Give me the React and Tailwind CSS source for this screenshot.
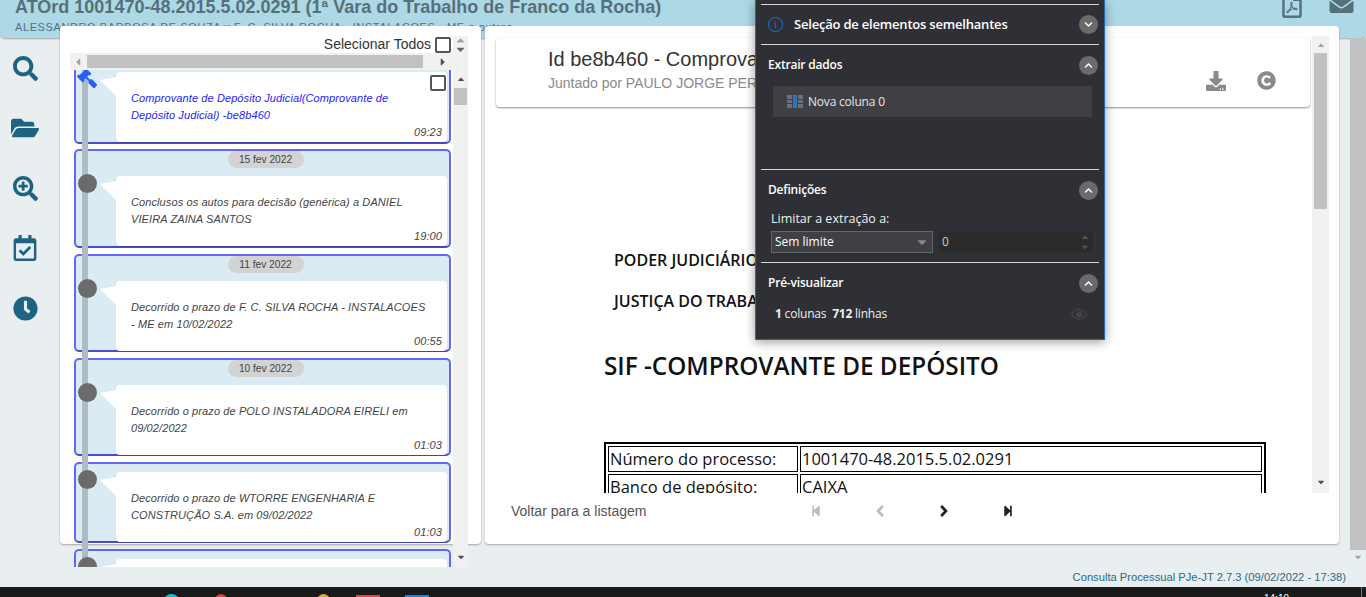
import {
  FaSearch,
  FaFolderOpen,
  FaSearchPlus,
  FaRegCalendarCheck,
  FaClock,
  FaGavel,
  FaRegFilePdf,
  FaEnvelope,
  FaDownload,
  FaCopyright,
  FaStepBackward,
  FaStepForward,
  FaAngleLeft,
  FaAngleRight,
  FaChevronDown,
  FaChevronUp,
  FaCaretUp,
  FaCaretDown,
  FaCaretLeft,
  FaCaretRight,
  FaRegEye,
} from 'react-icons/fa';

const cards = [
  { id: 2, date: '15 fev 2022', text: 'Conclusos os autos para decisão (genérica) a DANIEL VIEIRA ZAINA SANTOS', time: '19:00', h: 'h-[99px]' },
  { id: 3, date: '11 fev 2022', text: 'Decorrido o prazo de F. C. SILVA ROCHA - INSTALACOES - ME em 10/02/2022', time: '00:55', h: 'h-[98px]' },
  { id: 4, date: '10 fev 2022', text: 'Decorrido o prazo de POLO INSTALADORA EIRELI em 09/02/2022', time: '01:03', h: 'h-[98px]' },
  { id: 5, text: 'Decorrido o prazo de WTORRE ENGENHARIA E CONSTRUÇÃO S.A. em 09/02/2022', time: '01:03', h: 'h-[81px]' },
];

const railIcons = [
  { Icon: FaSearch, size: 'h-[25px] w-[25px]' },
  { Icon: FaFolderOpen, size: 'h-[28px] w-[28px]' },
  { Icon: FaSearchPlus, size: 'h-[25px] w-[25px]' },
  { Icon: FaRegCalendarCheck, size: 'h-[26px] w-[26px]' },
  { Icon: FaClock, size: 'h-[25px] w-[25px]' },
];

function Bubble({ text, time, blue, marker }) {
  return (
    <div className="relative ml-[40px] mr-[2px] h-[70px] rounded-[4px] bg-white pl-[15px] pr-[17px] pt-[18px] text-[11px] italic leading-[17px] tracking-[0.1px] shadow-[0_1px_1px_rgba(0,0,0,0.15)]">
      <svg className="absolute left-[-16px] top-[5px]" width="16" height="22" viewBox="0 0 16 22">
        <path d="M0 3 L16 0 L16 19 Z" fill="#fff" />
      </svg>
      {marker || <span className="absolute left-[-38px] top-[-2px] z-10 h-[19px] w-[19px] rounded-full bg-[#6b6b6b]" />}
      <p className={`h-[34px] ${blue ? 'text-[#2424ff]' : 'text-[#444]'}`}>{text}</p>
      <p className="absolute bottom-[1px] right-[5px] text-[11px] text-[#444]">{time}</p>
    </div>
  );
}

function Card({ date, text, time, h }) {
  return (
    <div className={`${h} mt-[6px] shrink-0 rounded-[5px] border-2 border-[#6666f5] border-b-[#4c4ad2] bg-[#dbebf3] ${date ? '' : 'pt-[8px]'}`}>
      {date && (
        <div className="flex h-[25px] justify-center">
          <span className="ml-[6px] h-[17px] w-[76px] rounded-full bg-[#d3d3d3] text-center text-[10.2px] leading-[17px] text-[#444]">{date}</span>
        </div>
      )}
      <Bubble text={text} time={time} />
    </div>
  );
}

function LeftPanel() {
  return (
    <div className="h-[518px] w-[421px] rounded-[4px] bg-white pl-[10px] pt-[10px] shadow-[0_1px_2px_rgba(0,0,0,0.3)]">
      <div className="flex h-[17px] w-[398px] items-center justify-end text-[14px] text-[#333]">
        <span>Selecionar Todos</span>
        <span className="ml-[4px] h-[16px] w-[16px] rounded-[2px] border-2 border-[#555]" />
        <div className="ml-[2px] flex h-[17px] w-[15px] flex-col items-center justify-center bg-[#f1f1f1]">
          <FaCaretUp className="-my-[2px] h-[13px] w-[13px] text-[#a3a3a3]" />
          <FaCaretDown className="-my-[2px] h-[13px] w-[13px] text-[#666]" />
        </div>
      </div>

      <div className="flex h-[17px] w-[398px] items-center bg-[#f1f1f1]">
        <FaCaretLeft className="ml-[4px] h-[12px] w-[8px] text-[#a3a3a3]" />
        <span className="ml-[5px] h-[13px] w-[336px] bg-[#c1c1c1]" />
        <FaCaretRight className="ml-[16px] h-[12px] w-[8px] text-[#505050]" />
      </div>

      <div className="relative flex h-[497px] w-[398px] overflow-hidden">
        <span className="absolute left-[12px] top-0 z-[5] h-full w-[6px] bg-[#b0bcc3]" />
        <div className="w-[383px] pl-[4px] pr-[2px]">
          <div className="relative mb-[-1px] h-[74px] rounded-b-[5px] border-2 border-t-0 border-[#6666f5] border-b-[#4c4ad2] bg-[#dbebf3] pt-[2px]">
            <Bubble
              blue
              text="Comprovante de Depósito Judicial(Comprovante de Depósito Judicial) -be8b460"
              time="09:23"
              marker={<FaGavel className="absolute left-[-39px] top-[-4px] z-10 h-[20px] w-[20px] -scale-x-100 text-[#2a5cf6]" />}
            />
            <span className="absolute right-[3px] top-[5px] h-[16px] w-[16px] rounded-[2px] border-2 border-[#555] bg-white" />
          </div>
          {cards.map((card) => (
            <Card key={card.id} {...card} />
          ))}
          <div className="mt-[6px] h-[40px] rounded-t-[5px] border-2 border-b-0 border-[#6666f5] bg-[#dbebf3] pt-[8px]">
            <Bubble text="" time="" />
          </div>
        </div>
        <div className="flex w-[15px] flex-col items-center bg-[#f1f1f1]">
          <FaCaretUp className="mt-[4px] h-[10px] w-[12px] text-[#505050]" />
          <span className="mt-[4px] h-[17px] w-[13px] bg-[#c1c1c1]" />
          <FaCaretDown className="mb-[5px] mt-auto h-[10px] w-[12px] text-[#505050]" />
        </div>
      </div>
    </div>
  );
}

function DocTable() {
  const rows = [
    ['Número do processo:', '1001470-48.2015.5.02.0291'],
    ['Banco de depósito:', 'CAIXA'],
  ];
  return (
    <table className="ml-[119px] mt-[59px] w-[662px] border-separate border-spacing-[2px] border-2 border-black text-[16.5px] leading-[22px] text-[#111]">
      <tbody>
        {rows.map(([label, value]) => (
          <tr key={label}>
            <td className="h-[26px] w-[190px] border border-black px-[1px]">{label}</td>
            <td className="h-[26px] border border-black px-[1px]">{value}</td>
          </tr>
        ))}
      </tbody>
    </table>
  );
}

function RightPanel() {
  return (
    <div className="ml-[4px] h-[518px] w-[854px] rounded-[4px] bg-white shadow-[0_1px_2px_rgba(0,0,0,0.3)]">
      <div className="flex h-[467px]">
        <div className="w-[827px] overflow-hidden pt-[12px]">
          <div className="ml-[11px] flex h-[69px] w-[814px] rounded-[4px] bg-white pl-[52px] pt-[8px] shadow-[0_1px_2px_rgba(0,0,0,0.45)]">
            <div>
              <p className="whitespace-nowrap text-[20px] leading-[26px] text-[#333]">Id be8b460 - Comprovante de Depósito Judicial</p>
              <p className="mt-[1px] whitespace-nowrap text-[14px] leading-[20px] text-[#8a8a8a]">Juntado por PAULO JORGE PER</p>
            </div>
            <div className="ml-auto mr-[34px] mt-[25px] flex items-start gap-[31px] text-[#8a8a8a]">
              <FaDownload className="h-[20px] w-[20px]" />
              <FaCopyright className="h-[19px] w-[19px]" />
            </div>
          </div>
          <div className="font-['Open_Sans',sans-serif] text-[#111]">
            <p className="ml-[129px] mt-[141px] text-[16px] font-semibold leading-[24px]">PODER JUDICIÁRIO</p>
            <p className="ml-[129px] mt-[17px] text-[16px] font-semibold leading-[24px]">JUSTIÇA DO TRABALHO</p>
            <h1 className="ml-[119px] mt-[36px] text-[24.3px] font-semibold leading-[34px]">SIF -COMPROVANTE DE DEPÓSITO</h1>
            <DocTable />
          </div>
        </div>
        <div className="mt-[10px] flex w-[17px] flex-col items-center bg-[#f1f1f1]">
          <FaCaretUp className="mt-[4px] h-[10px] w-[12px] text-[#a3a3a3]" />
          <span className="mt-[3px] h-[156px] w-[13px] bg-[#c1c1c1]" />
          <FaCaretDown className="mb-[6px] mt-auto h-[10px] w-[12px] text-[#505050]" />
        </div>
      </div>
      <div className="flex h-[36px] items-center text-[14px] text-[#555]">
        <span className="w-[299px] pl-[26px]">Voltar para a listagem</span>
        <span className="flex w-[64px] justify-center text-[#bdbdbd]"><FaStepBackward className="h-[12px] w-[12px]" /></span>
        <span className="flex w-[64px] justify-center text-[#bdbdbd]"><FaAngleLeft className="h-[18px] w-[18px]" /></span>
        <span className="flex w-[64px] justify-center text-[#222]"><FaAngleRight className="h-[18px] w-[18px]" /></span>
        <span className="flex w-[64px] justify-center text-[#222]"><FaStepForward className="h-[12px] w-[12px]" /></span>
      </div>
    </div>
  );
}

function Toggle({ up }) {
  return (
    <span className="flex h-[19px] w-[19px] items-center justify-center rounded-full bg-[#6a6a6a] text-white">
      {up ? <FaChevronUp className="h-[9px] w-[9px]" /> : <FaChevronDown className="h-[9px] w-[9px]" />}
    </span>
  );
}

function SectionHead({ title }) {
  return (
    <div className="mb-[1px] flex h-[40px] items-center justify-between pl-[7px] pr-[1px]">
      <span className="font-semibold tracking-[-0.2px]">{title}</span>
      <Toggle up />
    </div>
  );
}

function OverlayPanel() {
  return (
    <div className="absolute left-[755px] top-0 z-20 h-[340px] w-[350px] border border-t-0 border-[#1a6cb5] bg-[#2f3035] px-[5px] pt-[4px] font-['Open_Sans',sans-serif] text-[12px] text-white shadow-[0_2px_10px_rgba(0,0,0,0.4)]">
      <div className="flex h-[41px] items-center border-y border-[#d6d6d6] pl-[7px] pr-[1px]">
        <span className="flex h-[15px] w-[15px] items-center justify-center rounded-full border border-[#1c74d8] font-['Liberation_Serif',serif] text-[11px] leading-none text-[#1c74d8]">i</span>
        <span className="ml-[11px] text-[13px] font-semibold tracking-[-0.2px]">Seleção de elementos semelhantes</span>
        <span className="ml-auto"><Toggle /></span>
      </div>

      <div className="h-[125px] border-b border-[#d6d6d6]">
        <SectionHead title="Extrair dados" />
        <div className="ml-[12px] mr-[7px] flex h-[31px] items-center bg-[#3f4045] pl-[14px]">
          <svg width="16" height="13" viewBox="0 0 16 13">
            <rect width="16" height="13" fill="#6b7076" />
            <rect x="6.5" y="1" width="3" height="11" fill="#1c74d8" />
            <path d="M0 4.5h6M0 8.5h6M10 4.5h6M10 8.5h6" stroke="#3f4045" />
            <path d="M5.5 0v13M10.5 0v13" stroke="#3f4045" />
          </svg>
          <span className="ml-[5px] tracking-[-0.2px] text-[#e6e6e6]">Nova coluna 0</span>
        </div>
      </div>

      <div className="h-[93px] border-b border-[#d6d6d6]">
        <SectionHead title="Definições" />
        <p className="ml-[10px] text-[12.5px] leading-[16px] text-[#eee]">Limitar a extração a:</p>
        <div className="ml-[10px] mt-[4px] flex h-[22px]">
          <div className="flex w-[162px] items-center justify-between border border-[#666] bg-[#3f4045] pl-[3px] pr-[3px]">
            <span>Sem limite</span>
            <FaCaretDown className="h-[14px] w-[14px] text-[#888]" />
          </div>
          <div className="ml-[5px] flex w-[156px] items-center justify-between border border-[#303030] bg-[#2b2b2b] pl-[3px] pr-[3px] text-[#ccc]">
            <span>0</span>
            <div className="flex flex-col text-[#555]">
              <FaCaretUp className="h-[10px] w-[10px]" />
              <FaCaretDown className="h-[10px] w-[10px]" />
            </div>
          </div>
        </div>
      </div>

      <SectionHead title="Pré-visualizar" />
      <div className="flex items-center justify-between pl-[14px] pr-[12px] pt-[1px] tracking-[-0.2px] text-[#eee]">
        <span><b className="font-bold">1</b> colunas&nbsp; <b className="font-bold">712</b> linhas</span>
        <FaRegEye className="h-[16px] w-[16px] text-[#444]" />
      </div>
    </div>
  );
}

function Taskbar() {
  return (
    <div className="relative flex h-[10px] shrink-0 overflow-hidden bg-[#1a1a1a] pl-[163px] pt-[7px]">
      <span className="h-[24px] w-[17px] rounded-full bg-[#22b8cf]" />
      <span className="ml-[35px] h-[24px] w-[12px] rounded-full bg-[#d9433f]" />
      <span className="ml-[90px] h-[24px] w-[13px] rounded-full bg-[#d4b02a]" />
      <span className="ml-[26px] mt-[1px] h-[24px] w-[24px] bg-[#ee3d36]" />
      <span className="ml-[25px] mt-[1px] h-[24px] w-[24px] bg-[#1684e0]" />
      <span className="ml-[835px] mt-[-1px] text-[10px] leading-[12px] text-white">14:19</span>
      <span className="absolute right-[4px] top-0 h-full w-px bg-[#777]" />
    </div>
  );
}

export default function App() {
  return (
    <div className="relative flex h-[597px] w-full flex-col overflow-hidden bg-[#e9eef1] font-['Liberation_Sans',Arial,sans-serif]">
      <header className="flex h-[38px] shrink-0 justify-between overflow-hidden rounded-b-[5px] bg-[#add8e6] pl-[15px] pr-[11px] text-[#56707a] shadow-[0_1px_2px_rgba(0,0,0,0.3)]">
        <div className="-mt-[4px]">
          <h1 className="text-[18px] font-bold leading-[22px]">ATOrd 1001470-48.2015.5.02.0291 (1ª Vara do Trabalho de Franco da Rocha)</h1>
          <p className="mt-[2px] text-[11px] leading-[14px] tracking-[0.6px]">ALESSANDRO BARBOSA DE SOUZA x F. C. SILVA ROCHA - INSTALACOES - ME e outros</p>
        </div>
        <div className="-mt-[8px] flex items-start gap-[26px]">
          <FaRegFilePdf className="h-[26px] w-[20px]" />
          <FaEnvelope className="h-[24px] w-[27px]" />
        </div>
      </header>

      <div className="flex min-h-0 flex-1">
        <nav className="w-[60px] shrink-0 pr-[10px] text-[#1f6382]">
          {railIcons.map(({ Icon, size }, i) => (
            <div key={i} className="flex h-[60px] items-center justify-center">
              <Icon className={size} />
            </div>
          ))}
        </nav>

        <div className="flex min-w-0 flex-1 flex-col">
          <div className="-mt-[12px] flex">
            <LeftPanel />
            <RightPanel />
          </div>
          <p className="mb-[4px] mt-auto pr-[4px] text-right text-[11.2px] leading-[12px] text-[#2b6a85]">Consulta Processual PJe-JT 2.7.3 (09/02/2022 - 17:38)</p>
        </div>

        <div className="flex w-[16px] shrink-0 flex-col items-center">
          <span className="h-[512px] w-full bg-[#c1c1c1]" />
          <FaCaretDown className="mt-[2px] h-[10px] w-[10px] text-[#a3a3a3]" />
        </div>
      </div>

      <Taskbar />
      <OverlayPanel />
    </div>
  );
}
